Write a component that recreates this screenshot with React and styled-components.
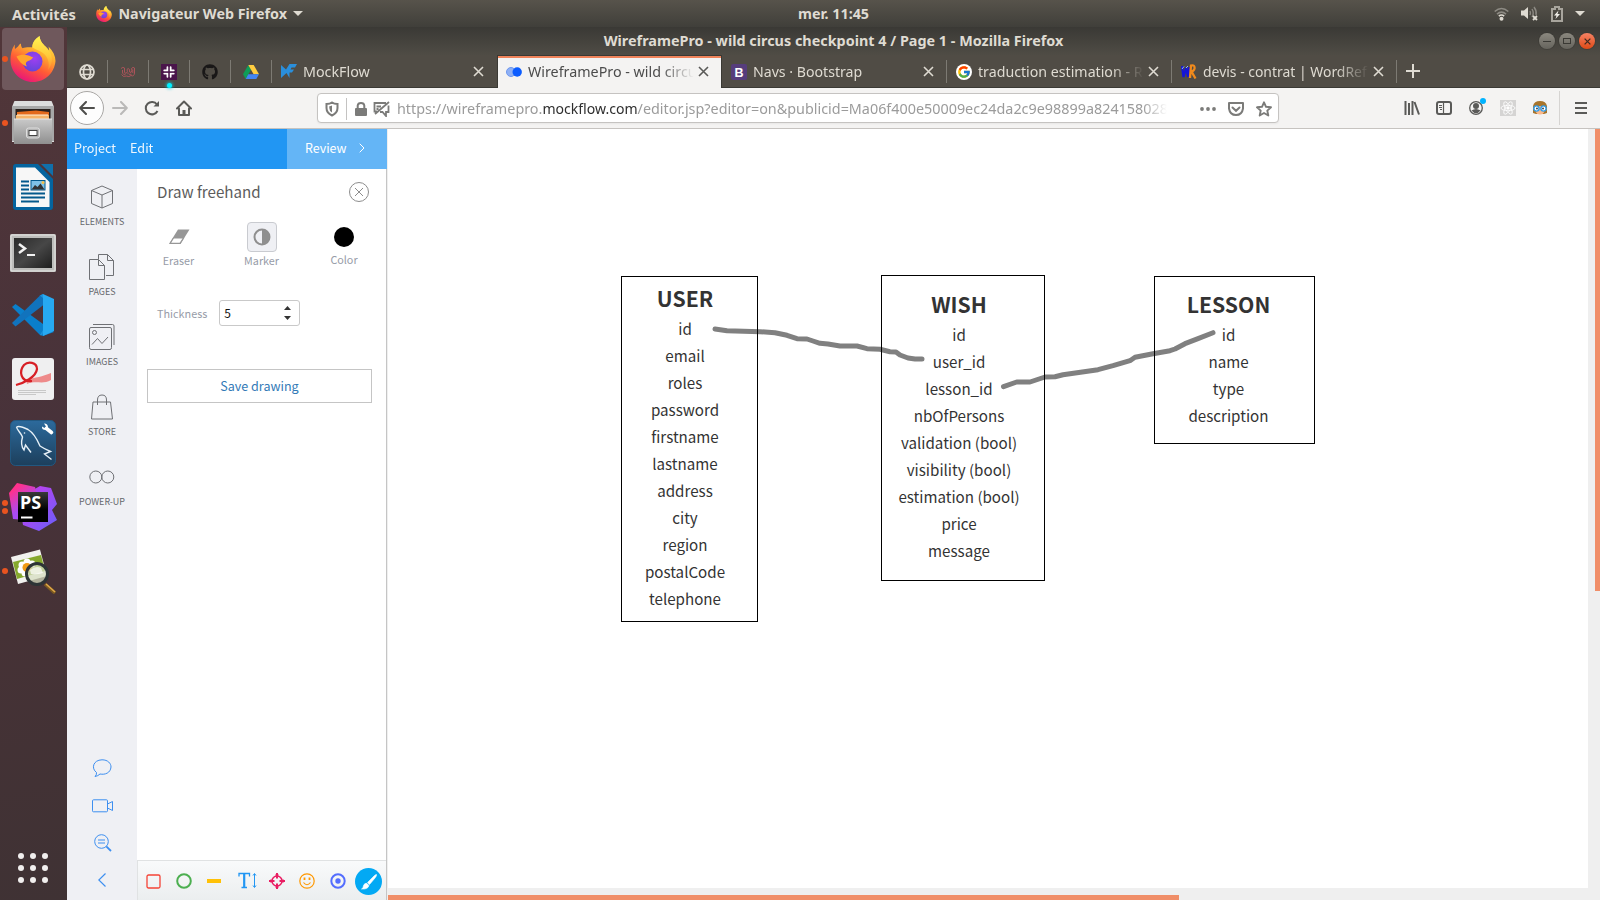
import React from 'react';
import styled, { createGlobalStyle, css } from 'styled-components';
import { FaGithub } from 'react-icons/fa';
import { FcGoogle } from 'react-icons/fc';

const UI = '"Noto Sans", "Open Sans", sans-serif';
const APP = '"Noto Sans CJK SC", "Noto Sans", sans-serif';

const GlobalStyle = createGlobalStyle`
  *, *::before, *::after { box-sizing: border-box; }
  html, body { margin: 0; padding: 0; overflow: hidden; }
  svg { display: block; flex: none; }
`;

/* ---------- Desktop ---------- */
const Desktop = styled.div`
  width: 1600px;
  height: 900px;
  display: grid;
  grid-template: 27px 873px / 67px 1533px;
  overflow: hidden;
  font-family: ${UI};
  background: #403234;
`;
const SystemBar = styled.header`
  grid-column: 1 / 3;
  display: grid;
  grid-template-columns: 798px 1fr auto;
  align-items: center;
  background: linear-gradient(#57534b, #403f3a);
  color: #dfdbd2;
  font-size: 14.3px;
  font-weight: 700;
  line-height: 26px;
  white-space: nowrap;
`;
const SystemLeft = styled.div`
  display: flex;
  align-items: center;
  padding-left: 12px;
`;
const Activities = styled.span`
  width: 84px;
  font-size: 14.7px;
`;
const AppName = styled.span`
  margin: 0 6px 0 6.5px;
`;
const SystemTray = styled.div`
  display: flex;
  align-items: center;
  padding-right: 15px;
`;
const TrayIcon = styled.span`
  margin-left: ${(p) => p.$gap}px;
`;

/* ---------- Dock ---------- */
const Dock = styled.nav`
  display: flex;
  flex-direction: column;
  background: linear-gradient(168deg, #513639 0%, #47323a 50%, #463236 68%, #3f3234 100%);
  padding: 1px 2px 0;
`;
const DockItem = styled.div`
  width: 62px;
  height: 62px;
  margin-bottom: 2px;
  display: grid;
  grid-template-columns: 6px 50px;
  align-items: center;
  border-radius: 4px;
  background: ${(p) => (p.$active ? '#6f585c' : 'transparent')};
`;
const DockDots = styled.div`
  display: flex;
  flex-direction: column;
  gap: 2px;
`;
const DockDot = styled.i`
  width: 6px;
  height: 6px;
  border-radius: 50%;
  background: #e95420;
`;
const DockArt = styled.span`
  display: grid;
  place-items: center;
  padding-top: ${(p) => p.$drop || 0}px;
`;
const DockGrid = styled.div`
  margin: auto 0 17px 16px;
  display: grid;
  grid-template-columns: repeat(3, 6px);
  gap: 6px;
`;
const GridDot = styled.i`
  width: 6px;
  height: 6px;
  border-radius: 50%;
  background: #f1efee;
`;

/* ---------- Browser ---------- */
const Browser = styled.section`
  display: grid;
  grid-template-rows: 28px 33px 41px 1fr;
  min-width: 0;
  background: #f4f3f2;
`;
const TitleBar = styled.div`
  display: grid;
  grid-template-columns: 1fr auto 1fr;
  align-items: center;
  background: linear-gradient(#3a3935, #4f4c45);
  color: #dfdbd2;
  font-size: 14.38px;
  font-weight: 700;
  line-height: 28px;
  white-space: nowrap;
`;
const WindowTitle = styled.span`
  grid-column: 2;
`;
const WindowButtons = styled.div`
  display: flex;
  justify-content: flex-end;
  gap: 4px;
  padding-right: 5px;
`;
const WindowButton = styled.span`
  width: 16px;
  height: 16px;
  display: grid;
  place-items: center;
  border-radius: 50%;
  background: ${(p) => (p.$close ? 'linear-gradient(#f58264, #df4a16)' : 'linear-gradient(#8b887f, #66645d)')};
  box-shadow: 0 0 0 1px #35342f66;
`;
const TabStrip = styled.div`
  display: flex;
  background: #504c45;
  box-shadow: inset 0 -1px #3a3934;
`;
const separator = 'linear-gradient(#7d7a73, #7d7a73) right 0 top 5px / 1px 23px no-repeat';
const PinnedTab = styled.div`
  position: relative;
  width: 41px;
  display: grid;
  place-items: center;
  padding-right: 1px;
  background: ${separator};
`;
const PinnedNotice = styled.i`
  position: absolute;
  left: 18px;
  bottom: 0;
  width: 5px;
  height: 5px;
  border-radius: 50%;
  background: #00f0ff;
  box-shadow: 0 0 3px 1px #00d5e5aa;
`;
const Tab = styled.div`
  width: 225px;
  display: flex;
  align-items: center;
  padding: 0 13px 0 9px;
  color: #dfdbd2;
  line-height: 30px;
  background: ${(p) => (p.$sep ? separator : 'none')};
  ${(p) =>
    p.$active &&
    css`
      color: #4c4c4c;
      background: #f4f3f2;
      border: solid #3a3934;
      border-width: 1px 1px 0;
      padding: 0 12px 1px 8px;
      box-shadow: inset 0 2px #f0835a;
    `}
`;
const TabLabel = styled.span`
  flex: 1;
  min-width: 0;
  margin: 0 3px 0 6px;
  white-space: nowrap;
  font-size: ${(p) => p.$size || 14.3}px;
  mask-image: linear-gradient(90deg, #000 calc(100% - 34px), transparent calc(100% - 1px));
`;
const NewTab = styled.div`
  padding: 9px 0 0 9px;
`;
const NavBar = styled.div`
  display: flex;
  align-items: center;
  border-bottom: 1px solid #c6c3c0;
  background: #f4f3f2;
  padding-left: 3px;
`;
const BackButton = styled.span`
  width: 34px;
  height: 34px;
  display: grid;
  place-items: center;
  border: 1px solid #a9a7a5;
  border-radius: 50%;
  background: #fdfdfd;
`;
const NavIcon = styled.span`
  width: 32px;
  display: grid;
  place-items: center;
`;
const UrlBar = styled.div`
  width: 962px;
  height: 30px;
  margin-left: 117px;
  padding: 1px 0 0 6px;
  display: flex;
  align-items: center;
  border: 1px solid #c5c3c1;
  border-radius: 4px;
  background: #fff;
  box-shadow: 0 1px 2px #0000000d;
`;
const UrlDivider = styled.i`
  width: 1px;
  height: 22px;
  margin: 0 6px;
  background: #c4c3c2;
`;
const UrlText = styled.span`
  width: 770px;
  margin: 1px auto 0 6px;
  white-space: nowrap;
  color: #9b9b9b;
  font-size: 14.36px;
  line-height: 24px;
  mask-image: linear-gradient(90deg, #000 calc(100% - 24px), transparent);
`;
const UrlHost = styled.b`
  font-weight: 400;
  font-size: 14.05px;
  color: #2f2f2f;
`;
const UrlAction = styled.span`
  width: 28px;
  display: grid;
  place-items: center;
`;
const NavRight = styled.div`
  display: flex;
  align-items: center;
  margin-left: auto;
`;
const MenuCell = styled.span`
  height: 34px;
  width: 41px;
  margin-left: 3px;
  padding-left: 2px;
  display: grid;
  place-items: center;
  border-left: 1px solid #d6d4d2;
`;

/* ---------- Application ---------- */
const Page = styled.main`
  display: grid;
  grid-template-columns: 320px 1fr;
  min-height: 0;
  font-family: ${APP};
  background: #fff;
`;
const SidePanel = styled.aside`
  display: grid;
  grid-template: 40px 1fr / 70px 250px;
`;
const MenuBar = styled.div`
  grid-column: 1 / 3;
  display: flex;
  background: #2196f3;
  color: #fff;
  font-size: 12.65px;
  line-height: 38px;
  padding-left: 7px;
`;
const MenuEntry = styled.span`
  margin-right: 14px;
  opacity: 0.92;
`;
const ReviewButton = styled.span`
  width: 100px;
  margin-left: auto;
  padding: 0 0 2px 18px;
  display: flex;
  align-items: center;
  gap: 12px;
  background: #64b5f6;
  font-size: 12.45px;
`;
const Rail = styled.div`
  display: flex;
  flex-direction: column;
  align-items: center;
  padding: 10px 0 2px;
  background: #eff0f4;
`;
const RailItem = styled.div`
  width: 70px;
  height: 70px;
  display: flex;
  flex-direction: column;
  align-items: center;
  color: #66686c;
  font-size: 8.95px;
  line-height: 14px;
`;
const RailGlyph = styled.span`
  height: 35px;
  margin-bottom: 1px;
  display: grid;
  place-items: center;
  svg { fill: none; stroke: #6f7175; stroke-width: 1; }
`;
const RailTools = styled.div`
  margin-top: auto;
  display: flex;
  flex-direction: column;
  align-items: center;
`;
const RailTool = styled.span`
  height: 37px;
  width: 40px;
  display: grid;
  place-items: center;
  padding-left: ${(p) => p.$shift || 0}px;
`;
const ToolPane = styled.div`
  display: flex;
  flex-direction: column;
  border-right: 1px solid #c5c5c5;
`;
const PaneHeader = styled.div`
  height: 46px;
  display: flex;
  align-items: center;
  justify-content: space-between;
  padding: 0 17px 0 20px;
  color: #5c5c5c;
`;
const PaneTitle = styled.span`
  padding-bottom: 2px;
  font-size: 15.15px;
`;
const ToolRow = styled.div`
  height: 56px;
  margin-top: 7px;
  display: grid;
  grid-template-columns: 83px 83px 83px;
  color: #979ca8;
  font-size: 10.75px;
`;
const Tool = styled.div`
  display: flex;
  flex-direction: column;
  align-items: center;
  line-height: 16px;
  padding-right: ${(p) => p.$pad || 0}px;
`;
const ToolBox = styled.span`
  width: 30px;
  height: 30px;
  margin-bottom: 1px;
  display: grid;
  place-items: center;
  border-radius: 4px;
  border: 1px solid ${(p) => (p.$on ? '#c9cbd0' : 'transparent')};
  background: ${(p) => (p.$on ? '#eff0f4' : 'none')};
`;
const Swatch = styled.i`
  width: 20px;
  height: 20px;
  margin: 5px 0 5px;
  border-radius: 50%;
  background: #000;
`;
const ThicknessRow = styled.label`
  margin-top: 22px;
  height: 26px;
  display: flex;
  align-items: center;
  padding-left: 20px;
  color: #979ca8;
  font-size: 10.85px;
`;
const NumberField = styled.span`
  width: 81px;
  height: 26px;
  margin-left: 12px;
  padding: 0 8px 0 4px;
  display: flex;
  align-items: center;
  justify-content: space-between;
  border: 1px solid #c9c9c9;
  border-radius: 3px;
  color: #111;
  font-size: 12px;
  line-height: 22px;
`;
const SaveButton = styled.button`
  width: 225px;
  height: 34px;
  margin: 43px 0 0 10px;
  padding: 0 0 1px;
  border: 1px solid #c5c5c5;
  background: #fff;
  color: #337ab7;
  font: 12.56px ${APP};
`;
const ShapeBar = styled.div`
  height: 40px;
  margin-top: auto;
  padding-top: 1px;
  display: flex;
  align-items: center;
  border-top: 1px solid #e0e2e3;
  border-left: 1px solid #e0e2e3;
  background: linear-gradient(#f9fafb, #ebeeef);
`;
const ShapeCell = styled.span`
  width: ${(p) => p.$w}px;
  display: grid;
  place-items: center;
`;
const Viewport = styled.div`
  display: grid;
  grid-template: 1fr 12px / 1fr 12px;
  padding-left: 1px;
  background: #efefef;
  min-height: 0;
`;
const Canvas = styled.div`
  position: relative;
  background: #fff;
`;
const VTrack = styled.div`
  display: flex;
  justify-content: flex-end;
`;
const HTrack = styled.div`
  display: flex;
  align-items: flex-end;
`;
const VThumb = styled.i`
  width: 5px;
  height: 462px;
  background: #f08e68;
`;
const HThumb = styled.i`
  width: 791px;
  height: 5px;
  background: #f08e68;
`;
const Stroke = styled.svg`
  position: absolute;
  left: 0;
  top: 0;
`;
const Entity = styled.div`
  position: absolute;
  left: ${(p) => p.$x}px;
  top: ${(p) => p.$y}px;
  width: ${(p) => p.$w}px;
  height: ${(p) => p.$h}px;
  padding: ${(p) => p.$top}px ${(p) => p.$right}px 0 0;
  border: 1px solid #000;
  text-align: center;
  color: #333;
  white-space: nowrap;
`;
const EntityName = styled.div`
  margin-bottom: ${(p) => p.$gap}px;
  font-size: 21.2px;
  font-weight: 700;
  line-height: 30px;
`;
const Field = styled.div`
  font-size: 15.15px;
  line-height: 27px;
`;

/* ---------- Icons ---------- */
const FirefoxIcon = ({ size, id }) => (
  <svg width={size} height={size} viewBox="0 0 46 46">
    <defs>
      <linearGradient id={id + 'a'} x1="0.8" y1="0" x2="0.3" y2="1">
        <stop offset="0" stopColor="#fff44f" />
        <stop offset="0.35" stopColor="#ffb02e" />
        <stop offset="0.65" stopColor="#ff5a36" />
        <stop offset="1" stopColor="#e8127c" />
      </linearGradient>
      <radialGradient id={id + 'b'} cx="0.6" cy="0.35" r="0.75">
        <stop offset="0" stopColor="#a03ff0" />
        <stop offset="1" stopColor="#5b46d8" />
      </radialGradient>
      <linearGradient id={id + 'c'} x1="0.5" y1="0" x2="0.5" y2="1">
        <stop offset="0" stopColor="#fff551" />
        <stop offset="0.6" stopColor="#ffc83a" />
        <stop offset="1" stopColor="#ff8a30" />
      </linearGradient>
    </defs>
    <path fill={`url(#${id}a)`} d="M5 8.500c-.4 1.500-.3 3 0 4.500l3-2.500c1-1.700 1.800-2.300 3-3 -.2 1.700.3 3.300 1.500 4.800 3-1.300 8-1 9.500-.800C23 6 25.500 3 29.500 0c.5 5 3 7.500 6 10.500 1.500 1.500 2.700 3.200 3.400 5 .3-1 .2-3-.4-5C43 15 45.500 20 45.500 25 44.500 37 35 46 23 46 10.500 46 .5 36 .5 24 .5 18 2 12 5 8.500z" />
    <path fill={`url(#${id}c)`} d="M22.500 11.500C22 6 25.500 3 29.500 0c.5 5 3 7.500 6 10.500C43 17 44 27 38 34c2-7 0-13-5-17-3-2.300-7-3-10.500-5.500z" />
    <circle cx="22.500" cy="25.500" r="10" fill={`url(#${id}b)`} />
    <path fill="#ffa52c" d="M6.500 20.500c3.500-2 8-2.500 12-1 2.500 1 3.500 1.800 4.500 1.500-1 3-4 3.500-6 4.500-1.500 1-1.500 3 0 5-5-1.500-8-5.500-10.500-10z" />
  </svg>
);
const FilesIcon = () => (
  <svg width="42" height="44" viewBox="0 0 42 44">
    <defs>
      <linearGradient id="files" x1="0" y1="0" x2="0" y2="1">
        <stop offset="0" stopColor="#c9c9c9" /><stop offset="1" stopColor="#8f8f8f" />
      </linearGradient>
    </defs>
    <path d="M2 1Q2 0 3 0H39Q40 0 40 1L42 6V41H0V6z" fill="#dcdcdc" />
    <path d="M0 5H42V40H0z" fill="#a7a7a7" />
    <path d="M3.500 8H38.500V18H3.500z" fill="#2a211d" />
    <path d="M5 11L24 9.500 37 11V20H5z" fill="#e36a1c" />
    <path d="M4 14H37V20H4z" fill="#f6b469" />
    <path d="M5 14H36" stroke="#fff3dd" strokeWidth="1" />
    <path d="M2 18H40V43H2z" fill="url(#files)" />
    <path d="M2 18H40" stroke="#e6e6e6" />
    <rect x="14.500" y="27" width="13" height="10" rx="2" fill="#b5b5b5" stroke="#dedede" />
    <rect x="17" y="29.500" width="8" height="5" fill="#fff" stroke="#444" />
  </svg>
);
const WriterIcon = () => (
  <svg width="40" height="46" viewBox="0 0 40 46">
    <path d="M3 0H25L40 15V43Q40 46 37 46H3Q0 46 0 43V3Q0 0 3 0z" fill="#04649f" />
    <path d="M28 0H40V12z" fill="#1070ab" />
    <path d="M3 3.500H22L36.500 18V43H3z" fill="#f7f7f7" />
    <g stroke="#04598c" strokeWidth="2">
      <path d="M8 17.500H16M8 21.500H16M8 25.500H16M8 29.500H32M8 33.500H32M8 37.500H26" />
    </g>
    <rect x="18" y="16.500" width="14" height="9.500" fill="#7fc1e6" stroke="#04598c" />
    <path d="M18.500 25.500L22 21 24.500 23 27.500 19.500 31.500 25.500z" fill="#333" />
    <circle cx="30" cy="18.500" r="1.500" fill="#f5c04a" />
  </svg>
);
const TerminalIcon = () => (
  <svg width="46" height="38" viewBox="0 0 46 38">
    <defs>
      <linearGradient id="term" x1="0" y1="0" x2="1" y2="1">
        <stop offset="0" stopColor="#2a2a2a" /><stop offset="0.5" stopColor="#474747" /><stop offset="1" stopColor="#1e1e1e" />
      </linearGradient>
    </defs>
    <rect width="46" height="38" rx="1.500" fill="#bdbdbb" />
    <rect x="1" y="1" width="44" height="36" rx="1" fill="none" stroke="#e6e6e4" />
    <rect x="4" y="4" width="38" height="30" fill="url(#term)" />
    <path d="M9 10L15 14.500 9 19" fill="none" stroke="#f2f2f2" strokeWidth="2.500" />
    <path d="M17 21H25" stroke="#f2f2f2" strokeWidth="2" />
  </svg>
);
const CodeIcon = () => (
  <svg width="42" height="42" viewBox="0 0 42 42">
    <path d="M0 13L3.500 10 42 38 31 42 28 41z" fill="#0a7fcb" />
    <path d="M0 29L3.500 32.500 34 9 31 0 28 1.500z" fill="#1173bd" />
    <path d="M31 0L42 5V37L31 42z" fill="#27a9f1" />
    <path d="M28 41Q31 42 31 38V0L28 1.500 31 4V36z" fill="#1c93dc" />
  </svg>
);
const DocIcon = () => (
  <svg width="42" height="42" viewBox="0 0 42 42">
    <rect width="42" height="42" rx="3" fill="#efeff0" />
    <path d="M6 32.500H34M6 34.500H34M6 36.500H24" stroke="#c8c8c8" />
    <path d="M14 22C24 19 30 19 39 15V22C31 27 24 22 15 26z" fill="#ee8a8a" />
    <path d="M4 27C12 25 24 19 25 11 25 4 16 3 12 7 7 13 8 24 20 23" fill="none" stroke="#d71f26" strokeWidth="2.200" />
  </svg>
);
const DolphinIcon = () => (
  <svg width="46" height="46" viewBox="0 0 46 46">
    <defs>
      <linearGradient id="dol" x1="0" y1="0" x2="0" y2="1">
        <stop offset="0" stopColor="#2c6a9c" /><stop offset="1" stopColor="#1d3f5c" />
      </linearGradient>
    </defs>
    <rect x="0.500" y="0.500" width="45" height="45" rx="5" fill="url(#dol)" stroke="#225881" />
    <path d="M6.500 7C9 5.500 14 7.500 18 9.500 24 13 27 19 30 26 33 28 37 30 40.500 31.500L34.500 34 41.500 39.500M6.500 7C7 10 11 13 12.500 17 11 22 11.500 27 14 30L15.500 25 21 32.500" fill="none" stroke="#e6f0f7" strokeWidth="1.400" />
    <circle cx="14.500" cy="13" r="0.800" fill="#e6f0f7" />
    <path d="M36.500 8.500L41.500 12.500" stroke="#fff" strokeWidth="3.600" strokeLinecap="round" />
    <path d="M34 3.500Q38 3.500 38 7.500L36 10Q31.500 10 32 6.500L34.500 8 36 6.500z" fill="#fff" />
  </svg>
);
const StormIcon = () => (
  <svg width="48" height="48" viewBox="0 0 48 48">
    <defs>
      <linearGradient id="ps1" x1="0" y1="0" x2="0.600" y2="1">
        <stop offset="0.200" stopColor="#ff318c" /><stop offset="0.700" stopColor="#a94bf5" />
      </linearGradient>
      <linearGradient id="ps2" x1="0" y1="0" x2="1" y2="1">
        <stop offset="0.300" stopColor="#b345f1" /><stop offset="0.850" stopColor="#765af8" />
      </linearGradient>
      <linearGradient id="ps3" x1="0" y1="0" x2="0" y2="1">
        <stop offset="0" stopColor="#3a3a3a" /><stop offset="0.600" stopColor="#000" />
      </linearGradient>
    </defs>
    <path d="M24 7L31 3 42 5 48 21 43 27 48 37 30 48 14 42 12 30z" fill="url(#ps2)" />
    <path d="M0 10L8 0 26 4 30 20 16 37 4 36z" fill="url(#ps1)" />
    <rect x="9" y="9" width="30" height="30" fill="url(#ps3)" />
    <text x="11" y="25.500" fill="#fff" fontSize="18" fontWeight="700" fontFamily="Noto Sans, sans-serif">PS</text>
    <path d="M12 34.500H23.500" stroke="#fff" strokeWidth="2" />
  </svg>
);
const ViewerIcon = () => (
  <svg width="46" height="46" viewBox="0 0 46 46">
    <path d="M1 9L30 1.500 37 28 8 36z" fill="#f1f1ee" />
    <path d="M3 14L31 7 35 23 7 31z" fill="#86a82d" />
    <g fill="#fff">
      <circle cx="12" cy="17" r="3.500" /><circle cx="17" cy="14" r="3.500" /><circle cx="22" cy="16" r="3.500" />
      <circle cx="11" cy="22" r="3.500" /><circle cx="15" cy="25" r="3.500" />
    </g>
    <circle cx="17" cy="19.500" r="4.500" fill="#f09a16" />
    <circle cx="27" cy="26" r="10.500" fill="#d5ddc0" fillOpacity="0.750" stroke="#2d3436" strokeWidth="3" />
    <path d="M20 22Q26 17 31 20L33 25Q27 27 21 26z" fill="#fff" fillOpacity="0.700" />
    <path d="M35 36L45 45" stroke="#7c5a20" strokeWidth="3.500" />
    <path d="M36 36L45 44" stroke="#e0a84a" strokeWidth="1.500" />
  </svg>
);
const Globe = () => (
  <svg width="16" height="16" viewBox="0 0 16 16" fill="none" stroke="#dfdbd2" strokeWidth="1.700">
    <circle cx="8" cy="8" r="7" /><ellipse cx="8" cy="8" rx="3.500" ry="7" /><path d="M1.500 5.500H14.500M1.500 10.500H14.500" />
  </svg>
);
const RedMark = () => (
  <svg width="16" height="16" viewBox="0 0 16 16" fill="none" stroke="#b5545c" strokeWidth="0.900">
    <path d="M1 4.500Q3 2.500 4.500 4V8Q5 10 6.500 9 8 8 7 5.500 8 3.500 9.500 5.500 9 9 11 8.500 12.500 6 11.500 4.500 13 2.500 14.500 4V9Q14 13 11 11.500 9 13.500 6.500 12 3 13.500 1.500 10.500M2.500 6V8Q2.500 9.500 3.500 10.300H5.500M12.800 5.500V9M8 10.300V8.500M9 10.300H11.500" />
  </svg>
);
const SlackMark = () => (
  <svg width="16" height="16" viewBox="0 0 16 16">
    <path fill="#4a154b" d="M0 0H16V16H0z" />
    <path d="M6.500 3.300V6.500H3.300M9.600 3.300V6.500H12.700M6.500 12.700V9.600H3.300M9.600 12.700V9.600H12.700" fill="none" stroke="#fff" strokeWidth="1.900" strokeLinecap="round" />
    <path d="M8 2V14M2 8H14" stroke="#4a154b" strokeWidth="0.900" />
  </svg>
);
const DriveMark = () => (
  <svg width="16" height="14" viewBox="0 0 16 14">
    <path fill="#0f9d58" d="M5.300 0L8 4.700 2.700 14 0 9.300z" />
    <path fill="#ffcd40" d="M5.300 0H10.700L16 9.300H10.600z" />
    <path fill="#4285f4" d="M5.300 9.300H16L13.300 14H2.700z" />
  </svg>
);
const MockMark = () => (
  <svg width="16" height="15" viewBox="0 0 16 15" fill="#2a8fdc">
    <path d="M0 1L5 5.500 8.500 0H16L14 3.500H10.500L9.500 5.500H13L11 8.500H8.500V14L5.500 9 0 14z" />
  </svg>
);
const WireMark = () => (
  <svg width="16" height="16" viewBox="0 0 16 16">
    <circle cx="5" cy="8" r="4.500" fill="#8fb0f4" stroke="#6d97ee" /><circle cx="11.200" cy="8" r="4.700" fill="#0b5cff" />
  </svg>
);
const BootMark = () => (
  <svg width="16" height="16" viewBox="0 0 16 16">
    <rect width="16" height="16" rx="2" fill="#563d7c" />
    <text x="3.600" y="12.500" fontSize="12.500" fontWeight="700" fill="#fff" fontFamily="Liberation Sans, sans-serif">B</text>
  </svg>
);
const GoogleBadge = styled.span`
  width: 16px;
  height: 16px;
  display: grid;
  place-items: center;
  border-radius: 50%;
  background: #fff;
`;
const WordMark = () => (
  <svg width="16" height="16" viewBox="0 0 16 16">
    <path d="M1 2L2.500 13 5 4 7 13 8 3" fill="none" stroke="#1414d8" strokeWidth="2.200" />
    <path d="M1 5L3 2.500M5 4L7 2" stroke="#8ab6ff" />
    <path d="M9 14L10 1.500Q14 .5 13.500 4.500 13 7 10.500 7.500L14.500 14.500" fill="none" stroke="#f08a1c" strokeWidth="2.300" />
  </svg>
);
const Cross = ({ color = '#dfdbd2', size = 11, w = 1.6 }) => (
  <svg width={size} height={size} viewBox="0 0 11 11" stroke={color} strokeWidth={w}><path d="M1 1L10 10M10 1L1 10" /></svg>
);
const Caret = ({ w = 10, h = 5, color = '#dfdbd2' }) => (
  <svg width={w} height={h} viewBox="0 0 10 5"><path d="M0 0H10L5 5z" fill={color} /></svg>
);

const dockItems = [
  { icon: <FirefoxIcon size={46} id="fxd" />, dots: 1, active: true },
  { icon: <FilesIcon />, dots: 1 },
  { icon: <WriterIcon />, dots: 0 },
  { icon: <TerminalIcon />, dots: 0, drop: 3 },
  { icon: <CodeIcon />, dots: 0 },
  { icon: <DocIcon />, dots: 0 },
  { icon: <DolphinIcon />, dots: 0 },
  { icon: <StormIcon />, dots: 2 },
  { icon: <ViewerIcon />, dots: 1 },
];

const tabs = [
  { icon: <MockMark />, label: 'MockFlow' },
  { icon: <WireMark />, label: 'WireframePro - wild circu', active: true },
  { icon: <BootMark />, label: 'Navs · Bootstrap', sep: true, size: 14.15 },
  { icon: <GoogleBadge><FcGoogle size={14} /></GoogleBadge>, label: 'traduction estimation - R', sep: true, size: 14.2 },
  { icon: <WordMark />, label: 'devis - contrat | WordRef', sep: true, size: 13.95 },
];

const railItems = [
  ['ELEMENTS', <svg width="24" height="24" viewBox="0 0 24 24"><path d="M1.500 5.500L12 1 22.500 5.500V18.500L12 23 1.500 18.500zM1.500 5.500L12 10 22.500 5.500M12 10V23" /></svg>],
  ['PAGES', <svg width="26" height="26" viewBox="0 0 26 26"><path d="M9.500 5V.5H18.500L24.500 6.500V21.500H17M18.500 .5V6.500H24.500M.5 5.500H9.500L15.500 11.500V25.500H.5zM9.500 5.500V11.500H15.500" /></svg>],
  ['IMAGES', <svg width="26" height="26" viewBox="0 0 26 26"><path d="M4 .5H23.500Q25 .5 25 2V21M2 3.500H21Q22.500 3.500 22.500 5V23.500Q22.500 25.500 21 25.500H2Q.5 25.500 .5 23.500V5Q.5 3.500 2 3.500zM3 20.500L8.500 14.500 13 19.500 19 13" /><circle cx="5.500" cy="8.500" r="2" /></svg>],
  ['STORE', <svg width="24" height="26" viewBox="0 0 24 26"><path d="M3 8H20.500L22.500 25H1.500zM7.500 11V6Q7.500 1 12 1 16.500 1 16.500 6V11" /></svg>],
  ['POWER-UP', <svg width="26" height="14" viewBox="0 0 26 14"><circle cx="6.800" cy="7" r="6" /><circle cx="18.800" cy="7" r="6" /></svg>],
];

const entities = [
  { name: 'USER', x: 621, y: 276, w: 137, h: 346, top: 6, right: 9, gap: 2, fields: ['id', 'email', 'roles', 'password', 'firstname', 'lastname', 'address', 'city', 'region', 'postalCode', 'telephone'] },
  { name: 'WISH', x: 881, y: 275, w: 164, h: 306, top: 13, right: 8, gap: 2, fields: ['id', 'user_id', 'lesson_id', 'nbOfPersons', 'validation (bool)', 'visibility (bool)', 'estimation (bool)', 'price', 'message'] },
  { name: 'LESSON', x: 1154, y: 276, w: 161, h: 168, top: 12, right: 12, gap: 2, fields: ['id', 'name', 'type', 'description'] },
];

export default function App() {
  return (
    <Desktop>
      <GlobalStyle />
      <SystemBar>
        <SystemLeft>
          <Activities>Activités</Activities>
          <FirefoxIcon size={16} id="fxs" />
          <AppName>Navigateur Web Firefox</AppName>
          <Caret />
        </SystemLeft>
        <span>mer. 11:45</span>
        <SystemTray>
          <svg width="15" height="14" viewBox="0 0 15 14" fill="none" strokeWidth="1.600">
            <path d="M.7 4.500Q7.500 -1.500 14.300 4.500M3 7.200Q7.500 3 12 7.200" stroke="#8d8a83" />
            <path d="M4.800 9.200Q7.500 6.800 10.200 9.200" stroke="#dfdbd2" /><circle cx="7.500" cy="11.800" r="2" fill="#dfdbd2" />
          </svg>
          <TrayIcon $gap={12}>
            <svg width="18" height="15" viewBox="0 0 18 15">
              <path d="M0 4.500H3L7 1V13L3 9.500H0z" fill="#dfdbd2" />
              <path d="M9 5Q10 7 9 9M11 3Q13.500 7 11 11M13 1Q16 5 15 9" stroke="#8d8a83" strokeWidth="1.400" fill="none" />
              <path d="M12 10L16 14M16 10L12 14" stroke="#dfdbd2" strokeWidth="1.800" />
            </svg>
          </TrayIcon>
          <TrayIcon $gap={12}>
            <svg width="12" height="16" viewBox="0 0 12 16">
              <path d="M1 3H4V1H8V3H11V15H1z" fill="none" stroke="#a8a59d" strokeWidth="2" />
              <path d="M7.500 4.500L3 9.500H5.500L4.500 13 9 8H6.500z" fill="#f0eee8" />
            </svg>
          </TrayIcon>
          <TrayIcon $gap={12}><Caret /></TrayIcon>
        </SystemTray>
      </SystemBar>

      <Dock>
        {dockItems.map((d, i) => (
          <DockItem key={i} $active={d.active}>
            <DockDots>{Array.from({ length: d.dots }, (_, k) => <DockDot key={k} />)}</DockDots>
            <DockArt $drop={d.drop}>{d.icon}</DockArt>
          </DockItem>
        ))}
        <DockGrid>{Array.from({ length: 9 }, (_, i) => <GridDot key={i} />)}</DockGrid>
      </Dock>

      <Browser>
        <TitleBar>
          <WindowTitle>WireframePro - wild circus checkpoint 4 / Page 1 - Mozilla Firefox</WindowTitle>
          <WindowButtons>
            <WindowButton><svg width="8" height="8"><path d="M0 4.500H8" stroke="#3a3934" /></svg></WindowButton>
            <WindowButton><svg width="8" height="6"><rect x=".5" y=".5" width="7" height="5" fill="none" stroke="#3a3934" /></svg></WindowButton>
            <WindowButton $close><Cross size={7} color="#3f2a20" w={2} /></WindowButton>
          </WindowButtons>
        </TitleBar>

        <TabStrip>
          <PinnedTab><Globe /></PinnedTab>
          <PinnedTab><RedMark /></PinnedTab>
          <PinnedTab><SlackMark /><PinnedNotice /></PinnedTab>
          <PinnedTab><FaGithub size={16} color="#191717" /></PinnedTab>
          <PinnedTab><DriveMark /></PinnedTab>
          {tabs.map((t) => (
            <Tab key={t.label} $active={t.active} $sep={t.sep}>
              {t.icon}
              <TabLabel $size={t.size}>{t.label}</TabLabel>
              <Cross color={t.active ? '#5a5a58' : '#dfdbd2'} />
            </Tab>
          ))}
          <NewTab><svg width="14" height="14" stroke="#dfdbd2" strokeWidth="2"><path d="M7 0V14M0 7H14" /></svg></NewTab>
        </TabStrip>

        <NavBar>
          <BackButton>
            <svg width="16" height="14" viewBox="0 0 16 14" fill="none" stroke="#4e4e4c" strokeWidth="2" strokeLinecap="round" strokeLinejoin="round"><path d="M15 7H1.500M7 1L1.200 7 7 13" /></svg>
          </BackButton>
          <NavIcon>
            <svg width="16" height="14" viewBox="0 0 16 14" fill="none" stroke="#bab9b8" strokeWidth="2" strokeLinecap="round" strokeLinejoin="round"><path d="M1 7H14.500M9 1L14.800 7 9 13" /></svg>
          </NavIcon>
          <NavIcon>
            <svg width="16" height="16" viewBox="0 0 16 16" fill="none" stroke="#5a5a58" strokeWidth="2"><path d="M13.500 11A6.200 6.200 0 1 1 13 4.500" /><path d="M15 1V6.500H9.500z" fill="#5a5a58" stroke="none" /></svg>
          </NavIcon>
          <NavIcon>
            <svg width="16" height="16" viewBox="0 0 16 16" fill="none" stroke="#5a5a58" strokeWidth="2" strokeLinejoin="round" strokeLinecap="round"><path d="M1 8.500L8 1.500 15 8.500M3 8.500V15H13V8.500" /><path d="M8 15V10" strokeWidth="3" strokeLinecap="butt" /></svg>
          </NavIcon>
          <UrlBar>
            <svg width="16" height="16" viewBox="0 0 16 16" fill="none" stroke="#7b7b79" strokeWidth="2"><path d="M2.500 3Q6 3 8 1.500 10 3 13.500 3V7Q13.500 12 8 14.500 2.500 12 2.500 7z" /><path d="M8 4.500V11.500Q5.300 10 5.300 7V5.200Q7 5 8 4.500z" fill="#7b7b79" stroke="none" /></svg>
            <UrlDivider />
            <svg width="16" height="16" viewBox="0 0 16 16"><rect x="2" y="7" width="12" height="8" rx="1" fill="#7b7b79" /><path d="M4.700 7.500V4.500Q5 2 8 2 11 2 11.300 4.500V7.500" fill="none" stroke="#7b7b79" strokeWidth="2" /></svg>
            <svg width="22" height="16" viewBox="-5 0 22 16" fill="none" stroke="#7b7b79" strokeWidth="1.800"><path d="M1 13L15 1M3 10.500H.5V2H12M6 11H8.500L12 15V11H14.500V4.500M2.500 5.500H7M2.500 8H4.500" /></svg>
            <UrlText>https://wireframepro.<UrlHost>mockflow.com</UrlHost>/editor.jsp?editor=on&amp;publicid=Ma06f400e50009ec24da2c9e98899a824158028</UrlText>
            <UrlAction><svg width="16" height="4" fill="#7b7b79"><circle cx="2" cy="2" r="1.900" /><circle cx="8" cy="2" r="1.900" /><circle cx="14" cy="2" r="1.900" /></svg></UrlAction>
            <UrlAction><svg width="16" height="16" viewBox="0 0 16 16" fill="none" stroke="#7b7b79" strokeWidth="2"><path d="M1 2H15V7.500Q14 14 8 14 2 14 1 7.500z" strokeLinejoin="round" /><path d="M4.500 6.500L8 9.800 11.500 6.500" strokeLinecap="round" /></svg></UrlAction>
            <UrlAction><svg width="16" height="16" viewBox="0 0 16 16" fill="none" stroke="#7b7b79" strokeWidth="1.900" strokeLinejoin="round"><path d="M8 1.300L10 5.800 15 6.300 11.300 9.600 12.300 14.500 8 12 3.700 14.500 4.700 9.600 1 6.300 6 5.800z" /></svg></UrlAction>
          </UrlBar>
          <NavRight>
            <NavIcon><svg width="16" height="16" viewBox="0 0 16 16" stroke="#5a5a58" strokeWidth="2"><path d="M1.500 1V15M5 3V15M8.500 1V15M10.500 2L15 14.500" /></svg></NavIcon>
            <NavIcon><svg width="16" height="14" viewBox="0 0 16 14" fill="none" stroke="#5a5a58" strokeWidth="2"><rect x="1" y="1" width="14" height="12" rx="2" /><path d="M7.500 1V13" strokeWidth="1.200" /><path d="M3 4.500H6M3 6.500H6M4 8.500H6" strokeWidth="1" /></svg></NavIcon>
            <NavIcon><svg width="20" height="22" viewBox="-2 1 20 22"><circle cx="8" cy="12" r="6.300" fill="none" stroke="#5a5a58" strokeWidth="1.300" /><circle cx="8" cy="10" r="3" fill="#5a5a58" /><path d="M3.500 14.500Q8 11.500 12.500 14.500 8 20 3.500 14.500z" fill="#5a5a58" /><circle cx="15" cy="5" r="3" fill="#00b3ff" /></svg></NavIcon>
            <NavIcon><svg width="16" height="16" viewBox="0 0 16 16" fill="none" stroke="#fff" strokeWidth="0.800"><path d="M0 0H16V16H0z" fill="#d5d4d3" stroke="none" /><ellipse cx="8" cy="8" rx="7" ry="2.700" /><ellipse cx="8" cy="8" rx="7" ry="2.700" transform="rotate(60 8 8)" /><ellipse cx="8" cy="8" rx="7" ry="2.700" transform="rotate(120 8 8)" /><circle cx="8" cy="8" r="1.300" fill="#fff" /></svg></NavIcon>
            <NavIcon><svg width="16" height="16" viewBox="0 0 16 16"><path d="M1 13V6Q2 1 8 1 14 1 15 6V13L12 14H4z" fill="#a8752c" /><path d="M3.500 6H12.500V11Q11.500 14.500 8 14.500 4.500 14.500 3.500 11z" fill="#fbb98c" /><circle cx="4.500" cy="8.500" r="2.600" fill="#fff" stroke="#2f9be8" strokeWidth="1.400" /><circle cx="11.500" cy="8.500" r="2.600" fill="#fff" stroke="#2f9be8" strokeWidth="1.400" /><circle cx="5" cy="8.500" r="0.900" fill="#234" /><circle cx="11" cy="8.500" r="0.900" fill="#234" /></svg></NavIcon>
            <MenuCell><svg width="12" height="12" stroke="#5a5a58" strokeWidth="2"><path d="M0 1H12M0 6H12M0 11H12" /></svg></MenuCell>
          </NavRight>
        </NavBar>

        <Page>
          <SidePanel>
            <MenuBar>
              <MenuEntry>Project</MenuEntry>
              <MenuEntry>Edit</MenuEntry>
              <ReviewButton>
                Review
                <svg width="6" height="10" fill="none" stroke="#fff"><path d="M.7 .7L5 5 .7 9.300" /></svg>
              </ReviewButton>
            </MenuBar>
            <Rail>
              {railItems.map(([label, glyph]) => (
                <RailItem key={label}>
                  <RailGlyph>{glyph}</RailGlyph>
                  {label}
                </RailItem>
              ))}
              <RailTools>
                <RailTool><svg width="20" height="19" viewBox="0 0 20 19" fill="none" stroke="#3d8ff0"><path d="M4.500 13.500C-1 9.500 1 1 10 .8 16 .8 19 4.500 19 8 18.500 14 13 16 8 15Q6 17 3 17.500 4.800 16 4.500 13.500z" /></svg></RailTool>
                <RailTool $shift={2}><svg width="22" height="14" viewBox="0 0 22 14" fill="none" stroke="#3d8ff0"><rect x=".5" y=".8" width="15" height="12" rx="1" /><path d="M15.500 5L20.500 2.500V11.500L15.500 9" /></svg></RailTool>
                <RailTool $shift={1}><svg width="18" height="18" viewBox="0 0 18 18" fill="none" stroke="#3d8ff0"><circle cx="7.500" cy="7.500" r="6.800" /><path d="M4 6H11M4 9H11" /><path d="M12.300 12.300L17 17" strokeWidth="1.800" /></svg></RailTool>
                <RailTool><svg width="8" height="14" viewBox="0 0 8 14" fill="none" stroke="#3d8ff0"><path d="M7.500 .5L.8 7 7.500 13.500" strokeWidth="1.200" /></svg></RailTool>
              </RailTools>
            </Rail>
            <ToolPane>
              <PaneHeader>
                <PaneTitle>Draw freehand</PaneTitle>
                <svg width="20" height="20" viewBox="0 0 20 20" fill="none" stroke="#8d8d8d"><circle cx="10" cy="10" r="9.500" /><path d="M6 6L14 14M14 6L6 14" /></svg>
              </PaneHeader>
              <ToolRow>
                <Tool>
                  <ToolBox><svg width="22" height="16" viewBox="0 0 22 16"><path d="M10 .5H21.500L12.500 15H1z" fill="#979797" strokeLinejoin="round" /><path d="M5.500 9H15.500L12 14.300H2.200z" fill="#fff" stroke="#979797" strokeWidth="1.200" strokeLinejoin="round" /></svg></ToolBox>
                  Eraser
                </Tool>
                <Tool>
                  <ToolBox $on><svg width="18" height="18" viewBox="0 0 18 18"><circle cx="9" cy="9" r="7.500" fill="none" stroke="#8f8f8f" strokeWidth="2" /><path d="M9 1.500V16.500A7.500 7.500 0 0 0 9 1.500z" fill="#8f8f8f" /></svg></ToolBox>
                  Marker
                </Tool>
                <Tool $pad={1}><Swatch />Color</Tool>
              </ToolRow>
              <ThicknessRow>
                Thickness
                <NumberField>
                  5
                  <svg width="7" height="14" viewBox="0 0 7 14" fill="#333"><path d="M0 4H7L3.500 0zM0 10H7L3.500 14z" /></svg>
                </NumberField>
              </ThicknessRow>
              <SaveButton>Save drawing</SaveButton>
              <ShapeBar>
                <ShapeCell $w={30}><svg width="15" height="15"><rect x="1" y="1" width="13" height="13" rx="1.500" fill="none" stroke="#f44336" strokeWidth="1.300" /></svg></ShapeCell>
                <ShapeCell $w={31}><svg width="16" height="16"><circle cx="8" cy="8" r="6.800" fill="none" stroke="#4caf50" strokeWidth="2" /></svg></ShapeCell>
                <ShapeCell $w={30}><svg width="14" height="4"><rect width="14" height="4" fill="#ffc107" /></svg></ShapeCell>
                <ShapeCell $w={36}><svg width="19" height="18" viewBox="0 0 19 18" fill="none" stroke="#2196f3"><path d="M1 4.500V1.500H11.500V4.500M3.500 15.500H9" strokeWidth="1.300" /><path d="M6.200 1.500V15.500" strokeWidth="2.200" /><path d="M16.500 2V15M15 3.500L16.500 1.500 18 3.500M15 13.500L16.500 15.500 18 13.500" /></svg></ShapeCell>
                <ShapeCell $w={24}><svg width="16" height="16" viewBox="0 0 16 16" fill="none" stroke="#e91e63"><circle cx="8" cy="8" r="5" strokeWidth="1.500" /><path d="M8 0V5.500M8 10.500V16M0 8H5.500M10.500 8H16" strokeWidth="2" /><path d="M6.500 2H9.500M6.500 14H9.500M2 6.500V9.500M14 6.500V9.500" strokeWidth="1.500" /></svg></ShapeCell>
                <ShapeCell $w={36}><svg width="16" height="16" viewBox="0 0 16 16" fill="none" stroke="#ff9800" strokeWidth="1.200"><circle cx="8" cy="8" r="7.200" /><path d="M4.500 9.500Q8 14 11.500 9.500" /><path d="M5.500 4.500V7M10.500 4.500V7" strokeWidth="1.800" /></svg></ShapeCell>
                <ShapeCell $w={26}><svg width="16" height="16"><circle cx="8" cy="8" r="6.700" fill="none" stroke="#536dfe" strokeWidth="2" /><circle cx="8" cy="8" r="2.700" fill="#536dfe" /></svg></ShapeCell>
                <ShapeCell $w={35}><svg width="27" height="27" viewBox="0 0 27 27"><circle cx="13.500" cy="13.500" r="13.500" fill="#03a9f4" /><path d="M21.500 6.500Q22 7.500 20 10L14.500 16.500 12.500 14.500 19 8Q21 6 21.500 6.500zM11.800 15.300L13.800 17.300Q13.500 21.500 6.500 21 8.500 20 8.500 17.500 9.500 15 11.800 15.300z" fill="#fff" stroke="#fff" strokeWidth="0.600" /></svg></ShapeCell>
              </ShapeBar>
            </ToolPane>
          </SidePanel>

          <Viewport>
            <Canvas>
              <Stroke width="1200" height="759" viewBox="388 129 1200 759" fill="none" stroke="#808080" strokeWidth="5" strokeLinecap="round" strokeLinejoin="round">
                <path d="M715 329L727 330.700 760 331.700 775 332.700 787 335.300 797 338.700 807 339 813 341 820 343.300 828 344 840 346 857 346 867 348.700 880 349.300 890 351.700 896 352 900 355 908 358 915 359 922 359" />
                <path d="M1003.500 386.700L1016.700 382 1030 382 1045 377 1055 376.700 1063 374.700 1098 369.700 1113 365.700 1130 360.700 1135 357.300 1153 353.700 1170 350.700 1175 349 1185 343.700 1198 338.700 1213 332.700" />
              </Stroke>
              {entities.map((e) => (
                <Entity key={e.name} $x={e.x - 388} $y={e.y - 129} $w={e.w} $h={e.h} $top={e.top} $right={e.right}>
                  <EntityName $gap={e.gap}>{e.name}</EntityName>
                  {e.fields.map((f) => <Field key={f}>{f}</Field>)}
                </Entity>
              ))}
            </Canvas>
            <VTrack><VThumb /></VTrack>
            <HTrack><HThumb /></HTrack>
          </Viewport>
        </Page>
      </Browser>
    </Desktop>
  );
}
